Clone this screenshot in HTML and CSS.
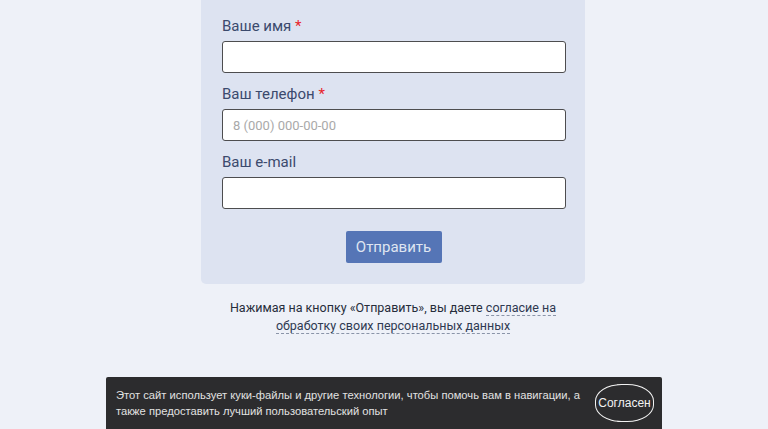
FILE: index.html
```html
<!DOCTYPE html>
<html lang="ru">
<head>
<meta charset="utf-8">
<title>Форма</title>
<link rel="stylesheet" href="styles.css">
</head>
<body>
<main class="page">
  <form class="card">
    <div class="field">
      <label class="label">Ваше имя <span class="req">*</span></label>
      <input class="input" type="text">
    </div>
    <div class="field">
      <label class="label">Ваш телефон <span class="req">*</span></label>
      <input class="input" type="text" placeholder="8 (000) 000-00-00">
    </div>
    <div class="field">
      <label class="label">Ваш e-mail</label>
      <input class="input" type="text">
    </div>
    <div class="actions">
      <button class="submit" type="button">Отправить</button>
    </div>
  </form>
  <p class="consent">Нажимая на кнопку «Отправить», вы даете <a class="link" href="#">согласие на</a><br><a class="link" href="#">обработку своих персональных данных</a></p>
</main>
<div class="cookie">
  <p class="cookie-text">Этот сайт использует куки-файлы и другие технологии, чтобы помочь вам в навигации, а также предоставить лучший пользовательский опыт</p>
  <button class="cookie-btn" type="button">Согласен</button>
</div>
</body>
</html>
```
FILE: styles.css
```css
html, body {
  margin: 0;
  padding: 0;
}
body {
  background: #eef1f8;
  font-family: Roboto, "Noto Sans", sans-serif;
  height: 429px;
  overflow: hidden;
}
.page {
  width: 384px;
  margin-left: 201px;
}
.card {
  background: #dde3f1;
  border-radius: 0 0 5px 5px;
  padding: 17px 20px 21px 21px;
}
.field {
  margin-bottom: 12px;
}
.label {
  display: block;
  font-size: 15px;
  line-height: 18px;
  color: #3b4a6d;
  margin-bottom: 6px;
}
.req {
  color: #e8252b;
}
.input {
  display: block;
  box-sizing: border-box;
  width: 344px;
  height: 32px;
  border: 1.5px solid #4d4d4f;
  border-radius: 3px;
  background: #fff;
  padding: 0 10px;
  font-family: Roboto, sans-serif;
  font-size: 13px;
  outline: none;
}
.input::placeholder {
  color: #a9a9a9;
}
.actions {
  display: flex;
  justify-content: center;
  padding-top: 10px;
}
.submit {
  width: 96px;
  height: 32px;
  background: #5575b6;
  border: none;
  border-radius: 2px;
  color: #dfe5f1;
  font-family: Roboto, sans-serif;
  font-size: 15px;
  padding: 0;
}
.consent {
  margin: 15px 0 0;
  text-align: center;
  font-size: 12.5px;
  line-height: 18px;
  color: #262d3b;
}
.link {
  color: #2f3a52;
  text-decoration: none;
  border-bottom: 1px dashed #8a94a8;
}
.cookie {
  position: fixed;
  left: 106px;
  bottom: 0;
  width: 556px;
  height: 52px;
  box-sizing: border-box;
  background: #2c2c2e;
  border-radius: 2px 2px 0 0;
  display: flex;
  align-items: center;
  padding: 0 8px 0 10px;
  gap: 10px;
}
.cookie-text {
  flex: 1;
  margin: 0;
  font-family: "Liberation Sans", Arial, sans-serif;
  font-size: 11.2px;
  line-height: 16px;
  color: #e2e2e2;
}
.cookie-btn {
  flex: none;
  width: 59px;
  height: 38px;
  box-sizing: border-box;
  border: 1.5px solid #f2f2f2;
  border-radius: 45%;
  background: transparent;
  color: #f2f2f2;
  font-family: "Liberation Sans", Arial, sans-serif;
  font-size: 12px;
  padding: 0;
}
```
